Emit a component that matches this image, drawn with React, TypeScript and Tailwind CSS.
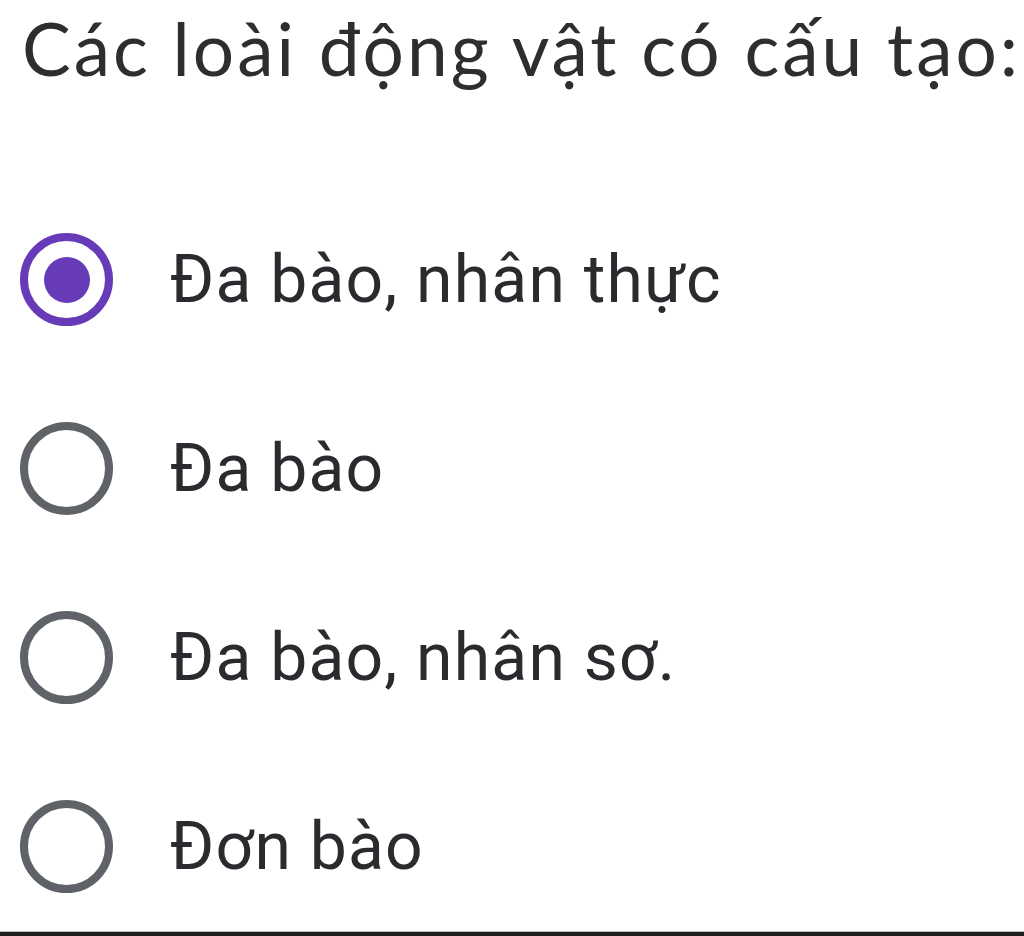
const options = ["Đa bào, nhân thực", "Đa bào", "Đa bào, nhân sơ.", "Đơn bào"];

const Radio = ({ checked }: { checked: boolean }) => (
  <div
    className={`w-[93px] h-[93px] shrink-0 rounded-full border-[8px] flex items-center justify-center ${
      checked ? "border-[#673ab7]" : "border-[#5f6368]"
    }`}
  >
    {checked && <div className="w-[46px] h-[46px] rounded-full bg-[#673ab7]" />}
  </div>
);

const App = () => {
  return (
    <div className="w-[1024px] h-[936px] bg-white flex flex-col overflow-hidden">
      <div className="flex-1 flex flex-col">
        <h1 className="pl-[22px] pt-[8px] text-[73px] leading-[80px] font-normal text-[#2d2e30] font-['Lato',sans-serif] whitespace-nowrap tracking-[3px]">
          Các loài động vật có cấu tạo:
        </h1>
        <div className="flex flex-col mt-[145px] gap-[96px]">
          {options.map((o, i) => (
            <div key={o} className="flex items-center pl-[20px] gap-[57px] h-[93px]">
              <Radio checked={i === 0} />
              <span className="text-[66px] leading-[93px] text-[#2a2b2e] font-['Roboto',sans-serif] whitespace-nowrap tracking-[1.2px]">
                {o}
              </span>
            </div>
          ))}
        </div>
      </div>
      <div className="h-[5px] border-t border-[#bdbdbd] bg-[#1f1f1f]" />
    </div>
  );
};

export default App;
